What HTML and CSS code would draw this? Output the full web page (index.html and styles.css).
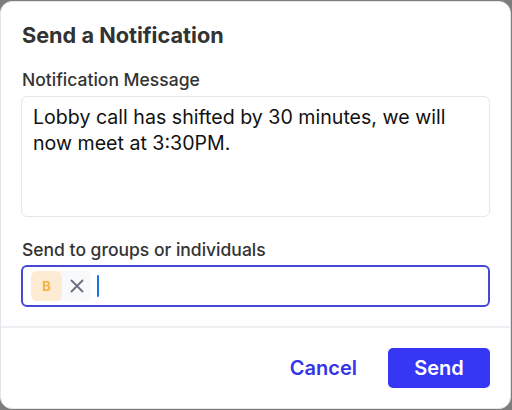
FILE: index.html
```html
<!DOCTYPE html>
<html>
<head>
<meta charset="utf-8">
<link rel="stylesheet" href="styles.css">
</head>
<body>
<div class="modal">
  <div class="content">
    <h1 class="title">Send a Notification</h1>
    <label class="label">Notification Message</label>
    <div class="textarea">Lobby call has shifted by 30 minutes, we will now meet at 3:30PM.</div>
    <label class="label label-to">Send to groups or individuals</label>
    <div class="input">
      <div class="chip">
        <span class="avatar">B</span>
        <svg class="x" width="14" height="14" viewBox="0 0 14 14"><path d="M1.5 1.5 L12.5 12.5 M12.5 1.5 L1.5 12.5" stroke="#6b7080" stroke-width="1.9" stroke-linecap="round" fill="none"/></svg>
      </div>
      <span class="caret"></span>
    </div>
  </div>
  <div class="footer">
    <button class="btn-cancel">Cancel</button>
    <button class="btn-send">Send</button>
  </div>
</div>
</body>
</html>
```

FILE: styles.css
```css
html, body {
  margin: 0;
  padding: 0;
  height: 100%;
}
body {
  background: #7d7d7d;
  font-family: Inter, "Liberation Sans", Arial, sans-serif;
  color: #333;
}
.modal {
  box-sizing: border-box;
  margin: 1px 1px 0 0;
  height: 408px;
  background: #fff;
  border: 1px solid #e4e4ea;
  border-radius: 12px;
  display: flex;
  flex-direction: column;
}
.content {
  padding: 0 20px 0 20px;
  border-bottom: 2px solid #eeeef3;
  height: 326px;
  box-sizing: border-box;
  display: flex;
  flex-direction: column;
}
.title {
  margin: 20px 0 0 1px;
  font-size: 21.7px;
  font-weight: 700;
  line-height: 26px;
  color: #333;
}
.label {
  display: block;
  margin: 22px 0 0 1px;
  font-size: 17.5px;
  font-weight: 500;
  line-height: 20px;
  color: #333;
}
.textarea {
  margin-top: 6px;
  height: 121px;
  box-sizing: border-box;
  border: 1px solid #e6e6e6;
  border-radius: 6px;
  padding: 7px 11px;
  font-size: 19.6px;
  line-height: 26px;
  color: #111;
}
.label-to {
  margin-top: 23px;
}
.input {
  margin-top: 5px;
  height: 42px;
  box-sizing: border-box;
  border: 2px solid #4747d6;
  border-radius: 6px;
  display: flex;
  align-items: center;
  padding: 0 8px;
  gap: 6px;
}
.chip {
  display: flex;
  align-items: center;
  background: #f8f9fa;
  border-radius: 6px;
  height: 30px;
  padding-right: 7px;
}
.avatar {
  width: 31px;
  height: 30px;
  border-radius: 6px;
  background: #fdecd3;
  color: #f6b33e;
  font-size: 13px;
  font-weight: 700;
  display: flex;
  align-items: center;
  justify-content: center;
  margin-right: 8px;
}
.x {
  display: block;
}
.caret {
  width: 2px;
  height: 22px;
  background: #1a73e8;
  border-radius: 1px;
}
.footer {
  flex: 1;
  display: flex;
  align-items: center;
  justify-content: flex-end;
  padding: 0 20px 0 0;
  gap: 31px;
}
.footer button {
  font-family: Inter, "Liberation Sans", Arial, sans-serif;
  font-size: 20px;
  font-weight: 600;
  border: none;
  cursor: pointer;
}
.btn-cancel {
  background: none;
  color: #3434e8;
  padding: 0;
}
.btn-send {
  background: #3636f5;
  color: #fff;
  width: 102px;
  height: 40px;
  border-radius: 5px;
  margin-top: 0;
}
```
